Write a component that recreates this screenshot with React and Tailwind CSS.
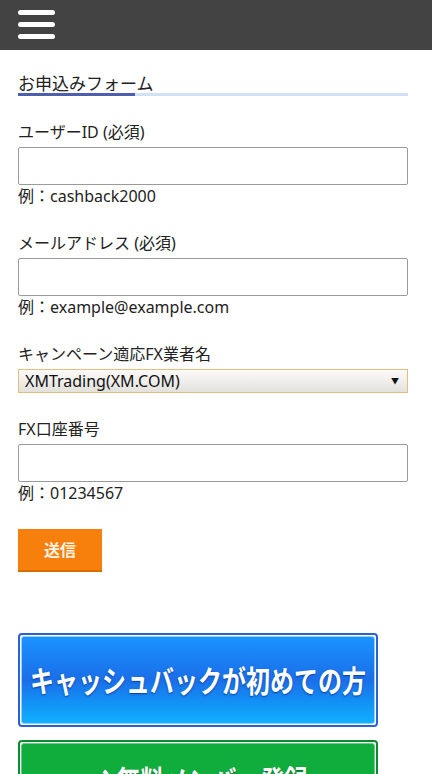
import React from 'react';

const font = { fontFamily: '"Noto Sans", "Noto Sans CJK JP", sans-serif' };

function Field({ label, example, children }) {
  return (
    <div className="mt-[25px]">
      <div className="text-[16px] leading-[22px] text-[#222] mb-[4px]">{label}</div>
      {children}
      {example && <div className="text-[16px] leading-[22px] text-[#222]">{example}</div>}
    </div>
  );
}

function TextBox() {
  return <div className="h-[38px] w-full rounded-[2px] border border-[#9a9a9a] bg-white" />;
}

export default function App() {
  return (
    <div className="min-h-[774px] w-[432px] overflow-hidden bg-white" style={font}>
      {/* header */}
      <div className="h-[50px] bg-[#434343] pl-[18px] pt-[10px]">
        <div className="flex w-[37px] flex-col gap-[7px]">
          <span className="h-[5px] rounded-full bg-white" />
          <span className="h-[5px] rounded-full bg-white" />
          <span className="h-[5px] rounded-full bg-white" />
        </div>
      </div>

      <div className="ml-[18px] w-[390px]">
        {/* title */}
        <div className="mt-[24px] text-[17px] leading-[19px] text-[#222]">お申込みフォーム</div>
        <div className="flex h-[3px]">
          <div className="w-[117px] bg-[#4d5fae]" />
          <div className="flex-1 bg-[#d3e1f6]" />
        </div>

        <Field label="ユーザーID (必須)" example="例：cashback2000">
          <TextBox />
        </Field>

        <Field label="メールアドレス (必須)" example="例：example@example.com">
          <TextBox />
        </Field>

        <Field label="キャンペーン適応FX業者名">
          <div className="flex h-[24px] items-center justify-between border border-[#e3bf7f] bg-gradient-to-b from-[#fcfbf8] to-[#e3e1dc] pl-[6px] pr-[8px]">
            <span className="text-[16px] leading-[20px] text-[#111]">XMTrading(XM.COM)</span>
            <span className="text-[8px] leading-none text-[#111]">▼</span>
          </div>
        </Field>

        <Field label="FX口座番号" example="例：01234567">
          <TextBox />
        </Field>

        <button className="mt-[25px] flex h-[43px] w-[84px] items-center justify-center border-b-2 border-[#d86a00] bg-[#f7800c] text-[16px] font-bold text-[#fff3e6]">
          送信
        </button>

        {/* banners */}
        <div className="mt-[61px] w-[360px] rounded-[4px] border-2 border-[#2c61d4] p-[1px]">
          <div className="flex h-[88px] items-center justify-center rounded-[3px] border border-[#8fd0ff] bg-gradient-to-b from-[#1b92ff] via-[#1b6ee9] to-[#0fb0ff]">
            <span
              className="scale-x-[0.8] whitespace-nowrap text-[30px] font-bold text-white"
              style={{ textShadow: '0 1px 2px #0a3c9a' }}
            >
              キャッシュバックが初めての方
            </span>
          </div>
        </div>

        <div className="mt-[13px] w-[360px] rounded-[4px] border-2 border-[#0d8a31] p-[1px]">
          <div className="flex h-[88px] items-start justify-center rounded-[3px] border border-[#5fd27f] bg-[#10ad3d] pt-[14px]">
            <span
              className="flex scale-x-[0.8] items-center gap-[6px] whitespace-nowrap text-[30px] font-bold text-white"
              style={{ textShadow: '0 1px 2px #05611f' }}
            >
              <svg width="30" height="30" viewBox="0 0 24 24" fill="white" className="shrink-0">
                <path d="M3 17.25V21h3.75L17.81 9.94l-3.75-3.75L3 17.25zM20.71 7.04a1 1 0 0 0 0-1.41l-2.34-2.34a1 1 0 0 0-1.41 0l-1.83 1.83 3.75 3.75 1.83-1.83z" />
              </svg>
              無料メンバー登録
            </span>
          </div>
        </div>
      </div>
    </div>
  );
}
